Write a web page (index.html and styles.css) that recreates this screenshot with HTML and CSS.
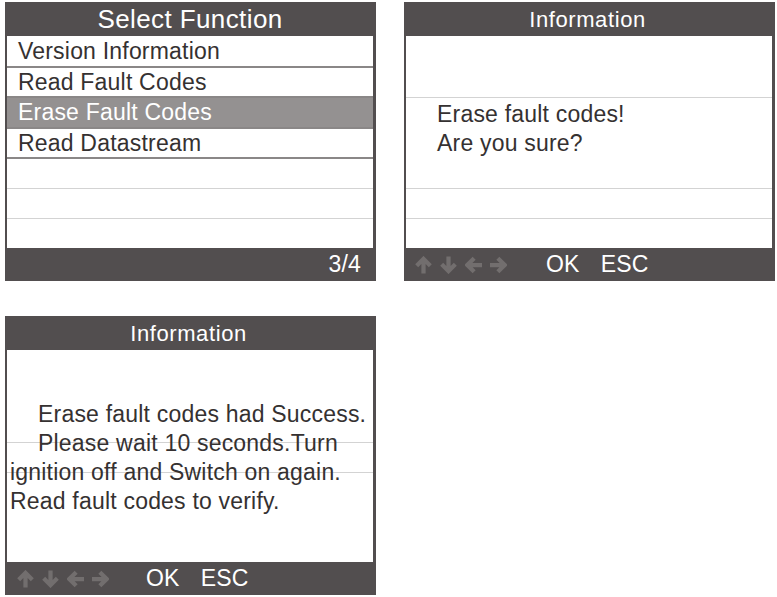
FILE: index.html
```html
<!DOCTYPE html>
<html lang="en">
<head>
<meta charset="utf-8">
<title>Scan tool screens</title>
<link rel="stylesheet" href="styles.css">
</head>
<body>
<div class="page">

  <section class="screen">
    <header class="title title-lg">Select Function</header>
    <div class="body">
      <div class="row strong first">Version Information</div>
      <div class="row strong">Read Fault Codes</div>
      <div class="row strong selected">Erase Fault Codes</div>
      <div class="row strong">Read Datastream</div>
      <div class="row light"></div>
      <div class="row light"></div>
      <div class="row"></div>
    </div>
    <footer class="bar bar-page">3/4</footer>
  </section>

  <section class="screen">
    <header class="title title-sm">Information</header>
    <div class="body">
      <div class="row"></div>
      <div class="row light"></div>
      <div class="row"></div>
      <div class="row"></div>
      <div class="row light"></div>
      <div class="row light"></div>
      <div class="row"></div>
      <div class="msg msg-confirm">
        <div>Erase fault codes!</div>
        <div>Are you sure?</div>
      </div>
    </div>
    <footer class="bar bar-keys">
      <span class="keys">
        <svg class="arrow" viewBox="0 0 18 18"><path d="M9 18V2.5M1.8 9.7L9 2.5l7.2 7.2"/></svg>
        <svg class="arrow" viewBox="0 0 18 18"><path d="M9 0v15.5M1.8 8.3L9 15.5l7.2-7.2"/></svg>
        <svg class="arrow" viewBox="0 0 18 18"><path d="M18 9H2.5M9.7 1.8L2.5 9l7.2 7.2"/></svg>
        <svg class="arrow" viewBox="0 0 18 18"><path d="M0 9h15.5M8.3 1.8L15.5 9l-7.2 7.2"/></svg>
      </span>
      <span class="key-ok">OK</span>
      <span class="key-esc">ESC</span>
    </footer>
  </section>

  <section class="screen">
    <header class="title title-sm">Information</header>
    <div class="body">
      <div class="row"></div>
      <div class="row"></div>
      <div class="row light"></div>
      <div class="row light"></div>
      <div class="row"></div>
      <div class="row"></div>
      <div class="row"></div>
      <div class="msg msg-result">
        <div class="indent">Erase fault codes had Success.</div>
        <div class="indent">Please wait 10 seconds.Turn</div>
        <div>ignition off and Switch on again.</div>
        <div>Read fault codes to verify.</div>
      </div>
    </div>
    <footer class="bar bar-keys bar-keys-3">
      <span class="keys">
        <svg class="arrow" viewBox="0 0 18 18"><path d="M9 18V2.5M1.8 9.7L9 2.5l7.2 7.2"/></svg>
        <svg class="arrow" viewBox="0 0 18 18"><path d="M9 0v15.5M1.8 8.3L9 15.5l7.2-7.2"/></svg>
        <svg class="arrow" viewBox="0 0 18 18"><path d="M18 9H2.5M9.7 1.8L2.5 9l7.2 7.2"/></svg>
        <svg class="arrow" viewBox="0 0 18 18"><path d="M0 9h15.5M8.3 1.8L15.5 9l-7.2 7.2"/></svg>
      </span>
      <span class="key-ok">OK</span>
      <span class="key-esc">ESC</span>
    </footer>
  </section>

</div>
</body>
</html>
```

FILE: styles.css
```css
html, body {
  margin: 0;
  background: #ffffff;
  font-family: "Liberation Sans", Arial, sans-serif;
}

.page {
  display: grid;
  grid-template-columns: 371px 371px;
  column-gap: 28px;
  row-gap: 35px;
  padding: 2px 0 0 5px;
}

.screen {
  box-sizing: border-box;
  height: 279px;
  border-left: 2px solid #524e4f;
  border-right: 3px solid #524e4f;
  display: flex;
  flex-direction: column;
}

.title {
  height: 34px;
  flex: none;
  background: #524e4f;
  color: #ffffff;
  display: flex;
  align-items: center;
  justify-content: center;
}

.title-lg {
  font-size: 26px;
  letter-spacing: 0.4px;
}

.title-sm {
  font-size: 22px;
  letter-spacing: 0.6px;
  padding-top: 2px;
  padding-right: 3px;
  box-sizing: border-box;
}

.body {
  height: 212px;
  flex: none;
  display: grid;
  grid-template-rows: 32px 30px 31px 30px 30px 30px 29px;
  position: relative;
  background: #ffffff;
}

.row {
  box-sizing: border-box;
  display: flex;
  align-items: center;
  padding-left: 11px;
  font-size: 23px;
  letter-spacing: 0.2px;
  color: #353131;
}

.row.strong {
  border-bottom: 2px solid #8a8787;
}

.row.light {
  border-bottom: 1px solid #d3d3d3;
}

.row.selected {
  background: #949191;
  color: #ffffff;
}

.msg {
  position: absolute;
  font-size: 23px;
  line-height: 29px;
  letter-spacing: 0.2px;
  color: #353131;
}

.msg-confirm {
  left: 31px;
  top: 64px;
}

.msg-result {
  left: 3px;
  top: 50px;
}

.msg-result .indent {
  padding-left: 28px;
}

.bar {
  flex: 1;
  background: #524e4f;
  color: #ffffff;
  font-size: 23px;
  letter-spacing: 0.2px;
  display: flex;
  align-items: center;
}

.bar-page {
  justify-content: flex-end;
  padding-right: 12px;
}

.bar-keys {
  padding-left: 9px;
}

.bar-keys-3 {
  padding-left: 10px;
}

.keys {
  display: flex;
  gap: 8px;
}

.arrow {
  width: 17px;
  height: 18px;
  fill: none;
  stroke: #726e6e;
  stroke-width: 4.5;
}

.key-ok {
  margin-left: 39px;
}

.bar-keys-3 .key-ok {
  margin-left: 37px;
}

.key-esc {
  margin-left: 21px;
}
```
